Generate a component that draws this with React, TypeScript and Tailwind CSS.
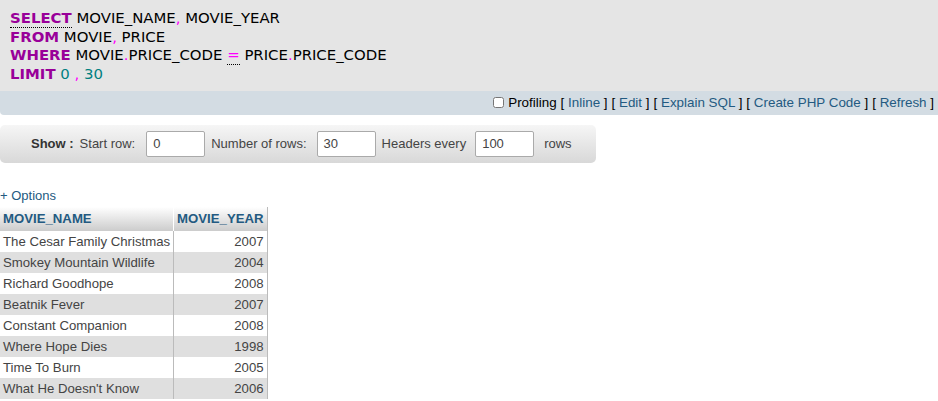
const rows: [string, string][] = [
  ['The Cesar Family Christmas', '2007'],
  ['Smokey Mountain Wildlife', '2004'],
  ['Richard Goodhope', '2008'],
  ['Beatnik Fever', '2007'],
  ['Constant Companion', '2008'],
  ['Where Hope Dies', '1998'],
  ['Time To Burn', '2005'],
  ["What He Doesn't Know", '2006'],
];

const Kw = ({ children }: { children: string }) => (
  <span className="font-bold text-[#990099]">{children}</span>
);
const Pun = ({ children }: { children: string }) => <span className="text-[#ff00ff]">{children}</span>;

export default function App() {
  return (
    <div className="w-[938px] h-[401px] overflow-hidden bg-white font-['Liberation_Sans',Arial,sans-serif] text-[13.2px] text-[#444]">
      {/* sql box */}
      <div className="h-[91px] bg-[#e5e5e5] pl-[10px] pt-[9px] font-['DejaVu_Sans',Verdana,sans-serif] text-[14.9px] leading-[18.5px] text-black">
        <div>
          <span className="font-bold text-[#990099] border-b border-dotted border-black">SELECT</span> MOVIE_NAME<Pun>,</Pun> MOVIE_YEAR
        </div>
        <div>
          <Kw>FROM</Kw> MOVIE<Pun>,</Pun> PRICE
        </div>
        <div>
          <Kw>WHERE</Kw> MOVIE<Pun>.</Pun>PRICE_CODE{' '}
          <span className="text-[#ff00ff] border-b border-dotted border-black">=</span> PRICE<Pun>.</Pun>PRICE_CODE
        </div>
        <div>
          <Kw>LIMIT</Kw> <span className="text-[#008080]">0</span> <Pun>,</Pun>{' '}
          <span className="text-[#008080]">30</span>
        </div>
      </div>

      {/* tools bar */}
      <div className="h-[24px] bg-[#d3dce3] rounded-bl-[4px] flex items-center justify-end pr-[4px] text-[13.4px] text-black">
        <input type="checkbox" className="w-[11px] h-[11px] mr-[4px] mt-[-1px]" />
        <span>Profiling</span>
        <span className="ml-[4px]">[ <span className="text-[#235a81]">Inline</span> ]</span>
        <span className="ml-[4px]">[ <span className="text-[#235a81]">Edit</span> ]</span>
        <span className="ml-[4px]">[ <span className="text-[#235a81]">Explain SQL</span> ]</span>
        <span className="ml-[4px]">[ <span className="text-[#235a81]">Create PHP Code</span> ]</span>
        <span className="ml-[4px]">[ <span className="text-[#235a81]">Refresh</span> ]</span>
      </div>

      {/* navigation */}
      <div className="mt-[10px] w-[596px] h-[38px] rounded-[5px] bg-gradient-to-b from-[#f6f6f6] to-[#d8d8d8] flex items-center pl-[31px] text-[13px] text-[#444]">
        <span className="font-bold text-[#333]">Show :</span>
        <span className="ml-[6px]">Start row:</span>
        <div className="ml-[11px] w-[59px] h-[26px] bg-white border border-[#aaa] rounded-[2px] pl-[6px] flex items-center">0</div>
        <span className="ml-[6px]">Number of rows:</span>
        <div className="ml-[10px] w-[59px] h-[26px] bg-white border border-[#aaa] rounded-[2px] pl-[6px] flex items-center">30</div>
        <span className="ml-[6px]">Headers every</span>
        <div className="ml-[9px] w-[59px] h-[26px] bg-white border border-[#aaa] rounded-[2px] pl-[6px] flex items-center">100</div>
        <span className="ml-[10px]">rows</span>
      </div>

      <div className="mt-[25px] text-[#235a81] text-[13px] leading-[16px]">+ Options</div>

      <table className="mt-[3px] border-collapse">
        <thead>
          <tr className="bg-gradient-to-b from-[#ffffff] to-[#cccccc] text-[#235a81] font-bold h-[24px]">
            <th className="text-left px-[3px] border-r border-[#fff]">MOVIE_NAME</th>
            <th className="text-left px-[3px] border-r border-[#bbb]">MOVIE_YEAR</th>
          </tr>
        </thead>
        <tbody>
          {rows.map(([name, year], i) => (
            <tr key={name} className={`h-[21px] ${i % 2 ? 'bg-[#dfdfdf]' : 'bg-white'}`}>
              <td className="px-[3px] border-r border-[#bbb] text-[#444]">{name}</td>
              <td className="px-[3px] border-r border-[#bbb] text-right text-[#444]">{year}</td>
            </tr>
          ))}
        </tbody>
      </table>
    </div>
  );
}
